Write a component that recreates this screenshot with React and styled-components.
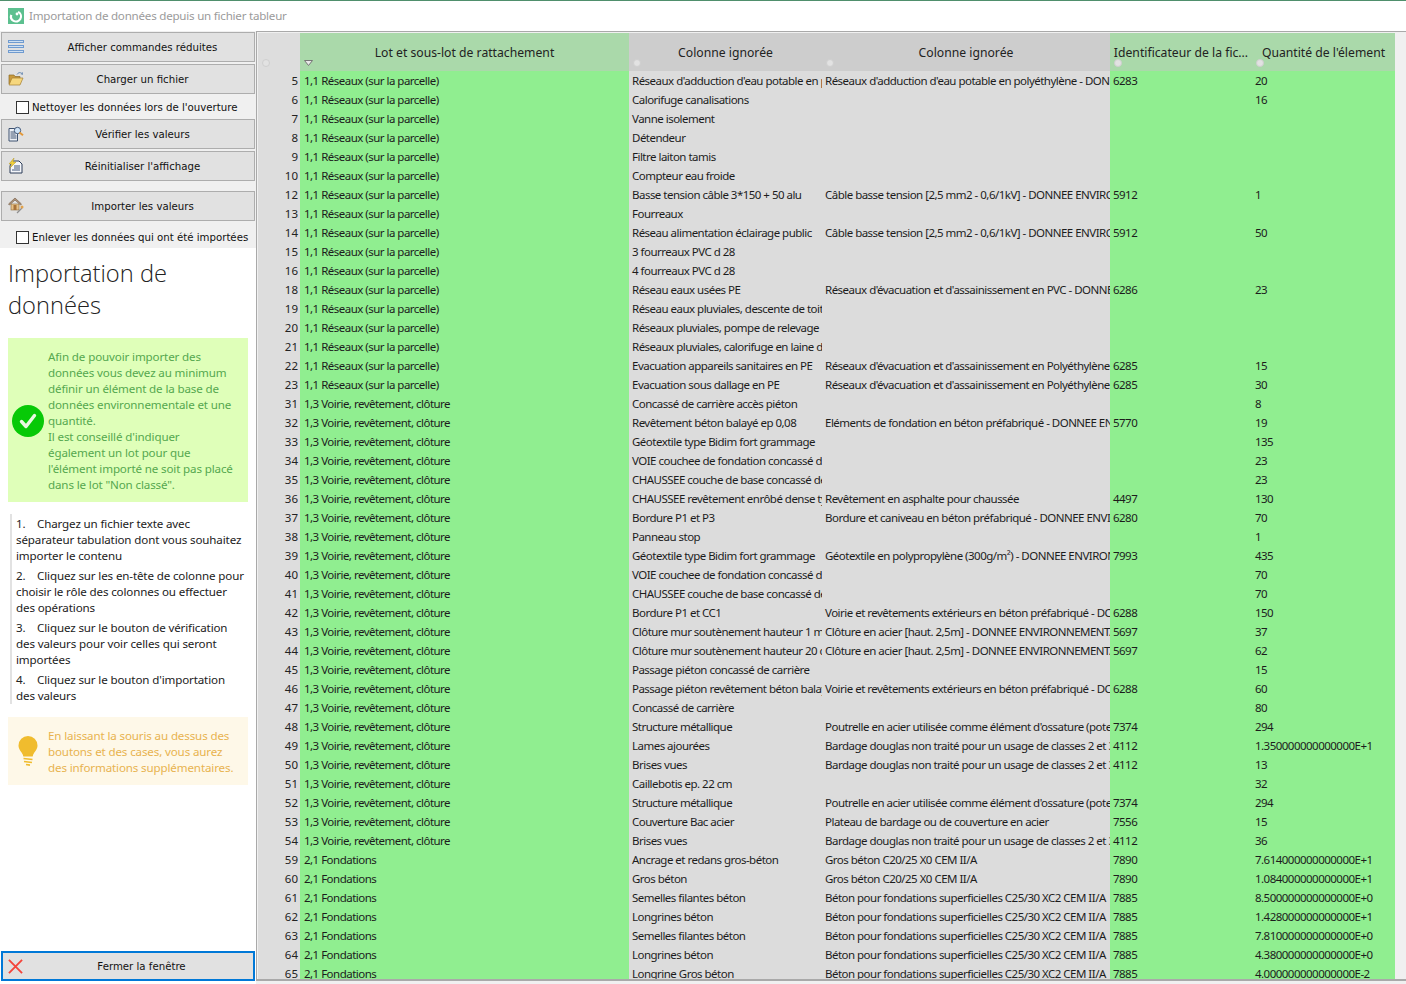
import React from "react";
import styled, { createGlobalStyle } from "styled-components";

const GlobalStyle = createGlobalStyle`
  html, body {
    margin: 0;
    padding: 0;
    height: 984px;
    overflow: hidden;
    background: #f0f0f0;
    font-family: "Noto Sans", sans-serif;
  }
`;

const Window = styled.div`
  width: 1406px;
  height: 984px;
  display: flex;
  flex-direction: column;
  overflow: hidden;
`;

const TitleBar = styled.div`
  height: 29px;
  padding: 0 0 1px 8px;
  flex: none;
  display: flex;
  align-items: center;
  gap: 5px;
  background: #fff;
  border-top: 1px solid #4f8f6c;
  color: #9b9b9b;
  font-size: 11.6px;
  letter-spacing: -0.02em;
`;

const Body = styled.div`
  flex: 1;
  min-height: 0;
  display: flex;
`;

const Side = styled.aside`
  width: 256px;
  flex: none;
  display: flex;
  flex-direction: column;
  background: #fff;
  padding-bottom: 3px;
`;

const Commands = styled.div`
  background: #f0f0f0;
  padding: 1px 1px 0;
  height: 217px;
  box-sizing: border-box;
  display: flex;
  flex-direction: column;
`;

const Button = styled.button`
  height: 30px;
  flex: none;
  width: 254px;
  box-sizing: border-box;
  margin: ${(p) => p.$top || 0}px 0 0 ${(p) => p.$left || 0}px;
  padding: 0 0 0 ${(p) => (p.$focus ? 5 : 6)}px;
  display: flex;
  align-items: center;
  background: #e1e1e1;
  border: ${(p) => (p.$focus ? "2px solid #0078d7" : "1px solid #adadad")};
  color: #111;
  font-family: "DejaVu Sans", sans-serif;
  font-size: 10.2px;
  & > span {
    flex: 1;
    text-align: center;
    padding-left: 7px;
  }
  & > svg {
    flex: none;
  }
`;

const CheckRow = styled.label`
  height: ${(p) => p.$h}px;
  flex: none;
  box-sizing: border-box;
  padding: ${(p) => p.$drop || 0}px 0 0 15px;
  display: flex;
  align-items: center;
  gap: 3px;
  color: #111;
  font-family: "DejaVu Sans", sans-serif;
  font-size: 10.2px;
  white-space: nowrap;
`;

const Check = styled.input.attrs({ type: "checkbox" })`
  appearance: none;
  width: 13px;
  height: 13px;
  margin: 0;
  background: #fff;
  border: 1px solid #333;
`;

const Heading = styled.h1`
  margin: 9px 8px 17px;
  color: #222;
  font-size: 23.7px;
  font-weight: 300;
  line-height: 32px;
  font-family: "Open Sans", sans-serif;
`;

const Notice = styled.div`
  margin: 0 8px;
  display: flex;
  align-items: center;
  gap: ${(p) => p.$gap}px;
  background: ${(p) => p.$bg};
  color: ${(p) => p.$fg};
  padding: ${(p) => p.$pad};
  font-size: 11.6px;
  line-height: 16px;
  letter-spacing: -0.012em;
  & > svg {
    flex: none;
  }
`;

const Steps = styled.ol`
  list-style: none;
  margin: 12px 10px 13px 10px;
  padding: 2px 0 0 4px;
  border-left: 2px solid #e2e2e2;
  color: #222;
  font-size: 11.6px;
  line-height: 16px;
  letter-spacing: -0.012em;
  & > li {
    margin-bottom: 4px;
  }
  & > li:last-child {
    margin-bottom: 0;
  }
  & b {
    font-weight: 400;
    display: inline-block;
    width: 21px;
  }
`;

const Spacer = styled.div`
  flex: 1;
`;

const Sheet = styled.main`
  flex: 1;
  min-width: 0;
  display: flex;
  flex-direction: column;
  height: 950px;
  background: #f0f0f0;
  border-top: 1px solid #a9a9a9;
  border-left: 1px solid #a9a9a9;
  border-bottom: 2px solid #a9a9a9;
  overflow: hidden;
  padding: 1px 0 0 1px;
  box-sizing: border-box;
`;

const Grid = styled.div`
  display: grid;
  grid-template-columns: 42px 329px 193px 288px 142px 143px;
  width: 1137px;
  grid-auto-rows: 19px;
  grid-template-rows: 38px;
`;

const HeadCell = styled.div`
  position: relative;
  display: flex;
  justify-content: center;
  align-items: flex-start;
  padding-top: 11px;
  overflow: hidden;
  white-space: nowrap;
  box-sizing: border-box;
  color: #222;
  font-size: 12.2px;
  background: ${(p) => (p.$used ? "#aad9aa" : p.$corner ? "#dddddd" : "#cdcdcd")};
`;

const Marker = styled.i`
  position: absolute;
  left: 4px;
  bottom: 4px;
  width: 8px;
  height: 8px;
  border-radius: 50%;
  background: #e2e2e2;
  border: 1px solid #cfcfcf;
  box-sizing: border-box;
`;

const SortMark = styled.svg`
  position: absolute;
  left: 4px;
  bottom: 5px;
`;

const Num = styled.div`
  background: #dddddd;
  color: #222;
  text-align: right;
  padding-right: 2px;
  font-size: 11.5px;
  line-height: 20px;
  overflow: hidden;
`;

const Cell = styled.div`
  background: ${(p) => (p.$used ? "#90ee90" : "#dcdcdc")};
  color: #1c1c1c;
  padding-left: ${(p) => p.$pad}px;
  font-size: 11.5px;
  line-height: 20px;
  white-space: nowrap;
  overflow: hidden;
  letter-spacing: -0.045em;
`;

const RES = "1,1 Réseaux (sur la parcelle)";
const VOI = "1,3 Voirie, revêtement, clôture";
const FON = "2,1 Fondations";
const ADD = "Réseaux d'adduction d'eau potable en polyéthylène - DONNEE ENVIRONNEMENTALE";
const CAB = "Câble basse tension [2,5 mm2 - 0,6/1kV] - DONNEE ENVIRONNEMENTALE";
const PVC = "Réseaux d'évacuation et d'assainissement en PVC - DONNEE ENVIRONNEMENTALE";
const POL = "Réseaux d'évacuation et d'assainissement en Polyéthylène";
const VRD = "Voirie et revêtements extérieurs en béton préfabriqué - DONNEE";
const CLO = "Clôture en acier [haut. 2,5m] - DONNEE ENVIRONNEMENTALE";
const POU = "Poutrelle en acier utilisée comme élément d'ossature (poteau, poutre)";
const BAR = "Bardage douglas non traité pour un usage de classes 2 et 3";
const GRO = "Gros béton C20/25 X0 CEM II/A";
const SUP = "Béton pour fondations superficielles C25/30 XC2 CEM II/A";
const SEM = "Semelles filantes béton";
const LON = "Longrines béton";
const VOIE = "VOIE couchee de fondation concassé de carrière";
const CHAU = "CHAUSSEE couche de base concassé de carrière";
const GEO = "Géotextile type Bidim fort grammage";
const STR = "Structure métallique";
const BRI = "Brises vues";

const rows = [
  [5, RES, "Réseaux d'adduction d'eau potable en polyéthylène", ADD, "6283", "20"],
  [6, RES, "Calorifuge canalisations", "", "", "16"],
  [7, RES, "Vanne isolement", "", "", ""],
  [8, RES, "Détendeur", "", "", ""],
  [9, RES, "Filtre laiton tamis", "", "", ""],
  [10, RES, "Compteur eau froide", "", "", ""],
  [12, RES, "Basse tension câble 3*150 + 50 alu", CAB, "5912", "1"],
  [13, RES, "Fourreaux", "", "", ""],
  [14, RES, "Réseau alimentation éclairage public", CAB, "5912", "50"],
  [15, RES, "3 fourreaux PVC d 28", "", "", ""],
  [16, RES, "4 fourreaux PVC d 28", "", "", ""],
  [18, RES, "Réseau eaux usées PE", PVC, "6286", "23"],
  [19, RES, "Réseau eaux pluviales, descente de toiture", "", "", ""],
  [20, RES, "Réseaux pluviales, pompe de relevage", "", "", ""],
  [21, RES, "Réseaux pluviales, calorifuge en laine de roche", "", "", ""],
  [22, RES, "Evacuation appareils sanitaires en PE", POL, "6285", "15"],
  [23, RES, "Evacuation sous dallage en PE", POL, "6285", "30"],
  [31, VOI, "Concassé de carrière accès piéton", "", "", "8"],
  [32, VOI, "Revêtement béton balayé ep 0,08", "Eléments de fondation en béton préfabriqué - DONNEE ENVIRONNEMENTALE", "5770", "19"],
  [33, VOI, GEO, "", "", "135"],
  [34, VOI, VOIE, "", "", "23"],
  [35, VOI, CHAU, "", "", "23"],
  [36, VOI, "CHAUSSEE revêtement enrôbé dense type", "Revêtement en asphalte pour chaussée", "4497", "130"],
  [37, VOI, "Bordure P1 et P3", "Bordure et caniveau en béton préfabriqué - DONNEE ENVIRONNEMENTALE", "6280", "70"],
  [38, VOI, "Panneau stop", "", "", "1"],
  [39, VOI, GEO, "Géotextile en polypropylène (300g/m²) - DONNEE ENVIRONNEMENTALE", "7993", "435"],
  [40, VOI, VOIE, "", "", "70"],
  [41, VOI, CHAU, "", "", "70"],
  [42, VOI, "Bordure P1 et CC1", VRD, "6288", "150"],
  [43, VOI, "Clôture mur soutènement hauteur 1 m", CLO, "5697", "37"],
  [44, VOI, "Clôture mur soutènement hauteur 20 cm", CLO, "5697", "62"],
  [45, VOI, "Passage piéton concassé de carrière", "", "", "15"],
  [46, VOI, "Passage piéton revêtement béton balayé", VRD, "6288", "60"],
  [47, VOI, "Concassé de carrière", "", "", "80"],
  [48, VOI, STR, POU, "7374", "294"],
  [49, VOI, "Lames ajourées", BAR, "4112", "1.350000000000000E+1"],
  [50, VOI, BRI, BAR, "4112", "13"],
  [51, VOI, "Caillebotis ep. 22 cm", "", "", "32"],
  [52, VOI, STR, POU, "7374", "294"],
  [53, VOI, "Couverture Bac acier", "Plateau de bardage ou de couverture en acier", "7556", "15"],
  [54, VOI, BRI, BAR, "4112", "36"],
  [59, FON, "Ancrage et redans gros-béton", GRO, "7890", "7.614000000000000E+1"],
  [60, FON, "Gros béton", GRO, "7890", "1.084000000000000E+1"],
  [61, FON, SEM, SUP, "7885", "8.500000000000000E+0"],
  [62, FON, LON, SUP, "7885", "1.428000000000000E+1"],
  [63, FON, SEM, SUP, "7885", "7.810000000000000E+0"],
  [64, FON, LON, SUP, "7885", "4.380000000000000E+0"],
  [65, FON, "Longrine Gros béton", SUP, "7885", "4.000000000000000E-2"],
];

const AppIcon = () => (
  <svg width="16" height="16" viewBox="0 0 16 16">
    <rect width="16" height="16" fill="#5cc08f" />
    <circle cx="8" cy="8.5" r="5" fill="none" stroke="#fff" strokeWidth="2.2" strokeDasharray="22 8" transform="rotate(-60 8 8.5)" />
    <circle cx="9" cy="6" r="1.4" fill="#fff" />
  </svg>
);

const LinesIcon = () => (
  <svg width="16" height="14" viewBox="0 0 16 14">
    <g fill="#cfe0f2" stroke="#6f9bd0">
      <rect x="0.5" y="0.5" width="15" height="2" />
      <rect x="0.5" y="5.5" width="15" height="2" />
      <rect x="0.5" y="10.5" width="15" height="2" />
    </g>
  </svg>
);

const FolderIcon = () => (
  <svg width="16" height="16" viewBox="0 0 16 16">
    <path d="M1 4h5l1 1.500h5V13H1z" fill="#c99a3c" stroke="#8a6a2a" strokeWidth="0.7" />
    <path d="M1 14l3-7h11l-3 7z" fill="#f6d77e" stroke="#a57f32" strokeWidth="0.7" />
    <path d="M9 3.500c1-2 3-2.400 4.600-1.400" fill="none" stroke="#6f8fb5" strokeWidth="1" />
    <path d="M15 1l-.2 3-2.400-1z" fill="#6f8fb5" />
  </svg>
);

const CheckDocIcon = () => (
  <svg width="16" height="16" viewBox="0 0 16 16">
    <path d="M1 2.500h8.500v12.500H1z" fill="#eef1f6" stroke="#3e5270" strokeWidth="1" />
    <path d="M2.500 6h5M2.500 8h5M2.500 10h6M2.500 12h6" stroke="#3e5270" strokeWidth="1" />
    <circle cx="9.500" cy="4.500" r="3.200" fill="#cfe3f6" stroke="#44597a" />
    <path d="M11.500 6.500l3.500 2.700" stroke="#e2983a" strokeWidth="2" />
  </svg>
);

const ResetIcon = () => (
  <svg width="16" height="16" viewBox="0 0 16 16">
    <path d="M4 3h7l3 3v9H2V8z" fill="#f4f6fa" stroke="#2c3c58" strokeWidth="1" />
    <path d="M6 8h6M6 10h6M4 12h8" stroke="#44597a" strokeWidth="1" />
    <path d="M6 0L1 6h3L2 10l6-6H5z" fill="#f2d23c" stroke="#b1942a" strokeWidth="0.5" />
  </svg>
);

const ImportIcon = () => (
  <svg width="16" height="18" viewBox="0 0 16 18">
    <path d="M0.500 7L7 1l6.500 6-1 1L7 3 1.500 8z" fill="#b2957b" stroke="#6b5843" strokeWidth="0.6" />
    <rect x="3" y="7" width="8" height="6" fill="#e7c187" stroke="#8c6b3f" strokeWidth="0.6" />
    <rect x="5.500" y="8" width="3" height="5" fill="#a8733a" />
    <path d="M9 16l5-5" stroke="#8f8f8f" strokeWidth="1.200" />
    <circle cx="14" cy="10" r="1.500" fill="#e2a24a" />
  </svg>
);

const CloseIcon = () => (
  <svg width="15" height="15" viewBox="0 0 16 16">
    <path d="M1 1l14 14M15 1L1 15" stroke="#f4443a" strokeWidth="2" />
  </svg>
);

const OkBadge = () => (
  <svg width="32" height="32" viewBox="0 0 32 32">
    <circle cx="16" cy="16" r="16" fill="#07c907" />
    <path d="M9.500 16.500l4.500 5L22.500 10.500" fill="none" stroke="#e8f9e0" strokeWidth="3.400" strokeLinecap="round" strokeLinejoin="round" />
  </svg>
);

const BulbIcon = () => (
  <svg width="20" height="34" viewBox="0 0 20 34">
    <path d="M10 1a9.500 9.500 0 0 0-9.500 9.500c0 4.200 3.300 6.500 4.500 9.500 0 1 .3 1.500 1 1.500h8c.7 0 1-.5 1-1.500 1.200-3 4.500-5.300 4.500-9.500A9.500 9.500 0 0 0 10 1z" fill="#f0bc2e" />
    <path d="M5.500 23.500l9 1M6 26.500l8 1M8 29.500l4 .6" stroke="#f0bc2e" strokeWidth="1.700" />
  </svg>
);

function App() {
  return (
    <Window>
      <GlobalStyle />
      <TitleBar>
        <AppIcon />
        Importation de données depuis un fichier tableur
      </TitleBar>
      <Body>
        <Side>
          <Commands>
            <Button>
              <LinesIcon />
              <span>Afficher commandes réduites</span>
            </Button>
            <Button $top={2}>
              <FolderIcon />
              <span>Charger un fichier</span>
            </Button>
            <CheckRow $h={25} $drop={2}>
              <Check />
              Nettoyer les données lors de l'ouverture
            </CheckRow>
            <Button>
              <CheckDocIcon />
              <span>Vérifier les valeurs</span>
            </Button>
            <Button $top={2}>
              <ResetIcon />
              <span>Réinitialiser l'affichage</span>
            </Button>
            <Button $top={10}>
              <ImportIcon />
              <span>Importer les valeurs</span>
            </Button>
            <CheckRow $h={27} $drop={6}>
              <Check />
              Enlever les données qui ont été importées
            </CheckRow>
          </Commands>
          <Heading>Importation de données</Heading>
          <Notice $bg="#dfffb9" $fg="#55a84f" $gap={4} $pad="11px 8px 9px 4px">
            <OkBadge />
            <div>
              Afin de pouvoir importer des données vous devez au minimum définir un élément de la base de données environnementale et une quantité.
              <br />
              Il est conseillé d'indiquer
              <br />
              également un lot pour que
              <br />
              l'élément importé ne soit pas placé
              <br />
              dans le lot "Non classé".
            </div>
          </Notice>
          <Steps>
            <li><b>1.</b>Chargez un fichier texte avec séparateur tabulation dont vous souhaitez importer le contenu</li>
            <li><b>2.</b>Cliquez sur les en-tête de colonne pour choisir le rôle des colonnes ou effectuer des opérations</li>
            <li><b>3.</b>Cliquez sur le bouton de vérification des valeurs pour voir celles qui seront importées</li>
            <li><b>4.</b>Cliquez sur le bouton d'importation des valeurs</li>
          </Steps>
          <Notice $bg="#fef8e8" $fg="#e8b34f" $gap={10} $pad="11px 8px 9px 10px">
            <BulbIcon />
            <div>
              En laissant la souris au dessus des boutons et des cases, vous aurez des informations supplémentaires.
            </div>
          </Notice>
          <Spacer />
          <Button $focus $left={1}>
            <CloseIcon />
            <span>Fermer la fenêtre</span>
          </Button>
        </Side>
        <Sheet>
          <Grid>
            <HeadCell $corner>
              <Marker />
            </HeadCell>
            <HeadCell $used>
              Lot et sous-lot de rattachement
              <SortMark width="9" height="6" viewBox="0 0 9 6">
                <path d="M.5.5h8L4.500 5.500z" fill="#e8e8e8" stroke="#777" />
              </SortMark>
            </HeadCell>
            <HeadCell>
              Colonne ignorée
              <Marker />
            </HeadCell>
            <HeadCell>
              Colonne ignorée
              <Marker />
            </HeadCell>
            <HeadCell $used>
              Identificateur de la fic...
              <Marker />
            </HeadCell>
            <HeadCell $used>
              Quantité de l'élement
              <Marker />
            </HeadCell>
            {rows.map((r) => (
              <React.Fragment key={r[0]}>
                <Num>{r[0]}</Num>
                <Cell $used $pad={4}>{r[1]}</Cell>
                <Cell $pad={3}>{r[2]}</Cell>
                <Cell $pad={3}>{r[3]}</Cell>
                <Cell $used $pad={3}>{r[4]}</Cell>
                <Cell $used $pad={3}>{r[5]}</Cell>
              </React.Fragment>
            ))}
          </Grid>
        </Sheet>
      </Body>
    </Window>
  );
}

export default App;
